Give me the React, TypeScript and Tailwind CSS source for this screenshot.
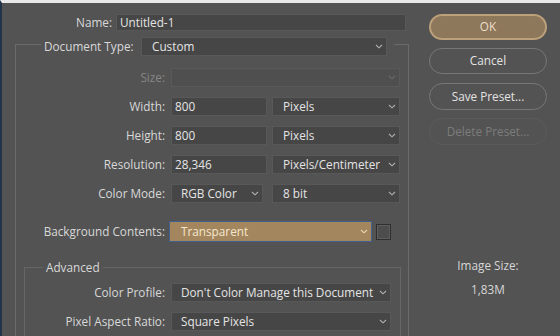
import React from 'react';

function Chevron({ dim = false, light = false }: { dim?: boolean; light?: boolean }) {
  const c = light ? '#e9d6b8' : dim ? '#6a6a6a' : '#b0b0b0';
  return (
    <svg width="8" height="5" viewBox="0 0 8 5" className="shrink-0">
      <polyline points="1,1 4,3.8 7,1" fill="none" stroke={c} strokeWidth="1.1" />
    </svg>
  );
}

function Select({ value, w, pl = 'pl-[10px]', disabled = false }: { value?: string; w: string; pl?: string; disabled?: boolean }) {
  return (
    <div
      className={`${w} h-[19px] flex items-center justify-between ${pl} pr-[3px] border ${
        disabled ? 'bg-[#4f4f4f] border-[#595959]' : 'bg-[#464646] border-[#585858]'
      } text-[#e4e4e4] whitespace-nowrap overflow-hidden`}
    >
      <span>{value}</span>
      <Chevron dim={disabled} />
    </div>
  );
}

function Input({ value, w }: { value: string; w: string }) {
  return (
    <div className={`${w} h-[19px] flex items-center pl-[3px] bg-[#464646] border border-[#585858] text-[#e4e4e4]`}>
      {value}
    </div>
  );
}

function Row({ label, children, dim = false }: { label: string; children: React.ReactNode; dim?: boolean }) {
  return (
    <div className="flex items-center h-[19px] mt-[10px]">
      <div className={`w-[149px] mr-[6px] text-right whitespace-nowrap ${dim ? 'text-[#868686]' : 'text-[#d8d8d8]'}`}>{label}</div>
      {children}
    </div>
  );
}

export default function App() {
  return (
    <div className="w-[560px] h-[336px] overflow-hidden bg-[#535353] border-t-[3px] border-t-[#e9e9e9] border-l-2 border-l-[#22344a] flex font-['Open_Sans',sans-serif] text-[11.75px] leading-none">
      {/* left column */}
      <div className="w-[408px] shrink-0 flex flex-col pt-[11px]">
        <div className="flex items-center gap-[4px] h-[17px]">
          <div className="w-[110px] text-right text-[#d8d8d8]">Name:</div>
          <div className="w-[290px] h-[17px] flex items-center pl-[3px] bg-[#464646] border border-[#585858] text-[#e4e4e4]">
            Untitled-1
          </div>
        </div>

        <div className="mt-[13px] ml-[13px] w-[394px] flex-1 border-t border-l border-r border-[#6a6a6a] flex flex-col">
          {/* legend */}
          <div className="-mt-[8px] ml-[25px] self-start flex items-center gap-[6px] bg-[#535353] pl-[3px] pr-[7px] h-[19px]">
            <div className="w-[91px] whitespace-nowrap text-[#d8d8d8]">Document Type:</div>
            <Select value="Custom" w="w-[246px]" />
          </div>

          <div className="mt-[2px]">
            <Row label="Size:" dim>
              <Select w="w-[229px]" disabled />
            </Row>
            <Row label="Width:">
              <Input value="800" w="w-[96px]" />
              <div className="ml-[5px]">
                <Select value="Pixels" w="w-[128px]" />
              </div>
            </Row>
            <Row label="Height:">
              <Input value="800" w="w-[96px]" />
              <div className="ml-[5px]">
                <Select value="Pixels" w="w-[128px]" />
              </div>
            </Row>
            <Row label="Resolution:">
              <Input value="28,346" w="w-[96px]" />
              <div className="ml-[5px]">
                <Select value="Pixels/Centimeter" w="w-[128px]" />
              </div>
            </Row>
            <Row label="Color Mode:">
              <Select value="RGB Color" w="w-[92px]" pl="pl-[9px]" />
              <div className="ml-[9px]">
                <Select value="8 bit" w="w-[128px]" />
              </div>
            </Row>

            <div className="flex items-center h-[21px] mt-[18px] gap-[4px]">
              <div className="w-[149px] text-right text-[#d8d8d8] whitespace-nowrap">Background Contents:</div>
              <div className="w-[203px] h-[21px] border border-[#40608f] bg-[#a3865d] flex items-center justify-between pl-[11px] pr-[3px] text-[#f4e6cf]">
                <span>Transparent</span>
                <Chevron light />
              </div>
              <div className="w-[15px] h-[16px] border border-[#2f2f2f] bg-[#4d4d4d] shadow-[inset_0_0_0_1px_#5e5e5e]" />
            </div>
          </div>

          {/* advanced group */}
          <div className="mt-[25px] ml-[8px] w-[377px] flex-1 border-t border-l border-r border-[#666666] flex flex-col">
            <div className="-mt-[9px] ml-[18px] self-start h-[17px] flex items-center bg-[#535353] px-[3px] text-[#d8d8d8]">
              Advanced
            </div>
            <div className="flex items-center gap-[6px] h-[19px] mt-[7px]">
              <div className="w-[140px] text-right text-[#d8d8d8]">Color Profile:</div>
              <Select value="Don't Color Manage this Document" w="w-[220px]" pl="pl-[9px]" />
            </div>
            <div className="flex items-center gap-[6px] h-[19px] mt-[10px]">
              <div className="w-[140px] text-right text-[#d8d8d8] whitespace-nowrap">Pixel Aspect Ratio:</div>
              <Select value="Square Pixels" w="w-[220px]" pl="pl-[9px]" />
            </div>
          </div>
        </div>
      </div>

      {/* right column */}
      <div className="flex flex-col pl-[19px] pt-[11px] w-[150px]">
        <button className="w-[118px] h-[26px] rounded-full bg-[#8d785b] border-2 border-[#bca07a] text-[#ecdfc9]">
          OK
        </button>
        <button className="mt-[8px] w-[118px] h-[26px] rounded-full border border-[#777777] text-[#e2e2e2]">
          Cancel
        </button>
        <button className="mt-[9px] w-[118px] h-[27px] rounded-full border border-[#777777] text-[#e2e2e2]">
          Save Preset...
        </button>
        <button className="mt-[8px] w-[118px] h-[27px] rounded-full border border-[#5b5b5b] text-[#7c7c7c]">
          Delete Preset...
        </button>
        <div className="mt-[112px] w-[118px] text-center text-[#d6d6d6] h-[17px] flex items-center justify-center">
          Image Size:
        </div>
        <div className="mt-[7px] w-[118px] text-center text-[#d6d6d6] h-[17px] flex items-center justify-center">
          1,83M
        </div>
      </div>
    </div>
  );
}
